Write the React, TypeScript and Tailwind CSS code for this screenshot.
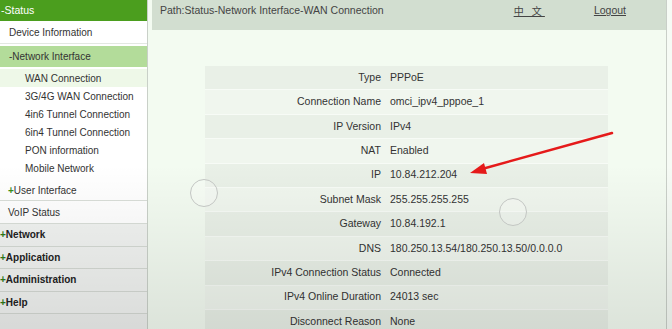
import React from "react";

const rows: [string, string][] = [
  ["Type", "PPPoE"],
  ["Connection Name", "omci_ipv4_pppoe_1"],
  ["IP Version", "IPv4"],
  ["NAT", "Enabled"],
  ["IP", "10.84.212.204"],
  ["Subnet Mask", "255.255.255.255"],
  ["Gateway", "10.84.192.1"],
  ["DNS", "180.250.13.54/180.250.13.50/0.0.0.0"],
  ["IPv4 Connection Status", "Connected"],
  ["IPv4 Online Duration", "24013 sec"],
  ["Disconnect Reason", "None"],
];

const subItems = [
  "3G/4G WAN Connection",
  "4in6 Tunnel Connection",
  "6in4 Tunnel Connection",
  "PON information",
  "Mobile Network",
];

const bottomItems = ["Network", "Application", "Administration", "Help"];

export default function App() {
  return (
    <div
      className="relative w-[672px] h-[329px] overflow-hidden flex bg-white text-[#333]"
      style={{ fontFamily: '"Liberation Sans", Arial, sans-serif' }}
    >
      {/* Sidebar */}
      <div className="w-[148px] shrink-0 flex flex-col border-r border-[#c9d0c8] bg-white text-[10px]">
        <div className="h-[21px] shrink-0 bg-[#4b9e1e] text-white flex items-center pl-[1px] text-[10.5px]">-Status</div>
        <div className="h-[23px] shrink-0 flex items-center pl-[9px] border-b border-[#e3e8e2]">Device Information</div>
        <div className="h-[2px] shrink-0" />
        <div className="h-[21px] shrink-0 bg-[#b3dc9a] flex items-center pl-[9px]">-Network Interface</div>
        <div className="h-[2px] shrink-0" />
        <div className="h-[18px] shrink-0 bg-[#eef8e8] flex items-center pl-[25px]">WAN Connection</div>
        {subItems.map((s) => (
          <div key={s} className="h-[18px] shrink-0 flex items-center pl-[25px]">
            {s}
          </div>
        ))}
        <div className="h-[4px] shrink-0" />
        <div className="h-[20px] shrink-0 flex items-center pl-[8px] border-b border-[#d9ded8]">
          <span className="text-[#3a8f1a] font-bold">+</span>User Interface
        </div>
        <div className="h-[23px] shrink-0 flex items-center pl-[8px] border-b border-[#d9ded8]">VoIP Status</div>
        {bottomItems.map((s) => (
          <div
            key={s}
            className="h-[22.5px] shrink-0 flex items-center pl-[0px] border-b border-[#d5dad4] bg-[#f1f3f1] font-bold text-[#222]"
          >
            <span className="text-[#2f7a14]">+</span>
            {s}
          </div>
        ))}
        <div className="flex-1 bg-[#eef0ee]" />
      </div>

      {/* Main */}
      <div className="w-[519px] shrink-0 flex flex-col bg-[#f3fbf1] border-r border-[#c9cfc8] pl-[4px]">
        <div className="h-[30px] shrink-0 bg-[#d2ded0] flex items-start pt-[3px] pl-[8px] text-[10.5px] text-[#444]">
          <span className="flex-1">Path:Status-Network Interface-WAN Connection</span>
          <span
            className="underline mr-[49px] tracking-[3px] text-[10px]"
            style={{ fontFamily: '"Noto Sans CJK SC", sans-serif' }}
          >
            中 文
          </span>
          <span className="underline mr-[40px]">Logout</span>
        </div>
        <div className="shrink-0 pt-[36px] pl-[53px]">
          <div className="w-[403px] flex flex-col text-[10.5px]">
            {rows.map(([k, v], i) => (
              <div
                key={k}
                className={`h-[24.4px] shrink-0 flex items-center border-b border-[#f7fbf6] ${
                  i % 2 === 0 ? "bg-[#e9f0e7]" : "bg-[#f0f6ee]"
                }`}
              >
                <div className="w-[180px] shrink-0 text-right pr-[4px]">{k}</div>
                <div className="pl-[5px]">{v}</div>
              </div>
            ))}
          </div>
        </div>
      </div>
      <div className="flex-1 bg-[#f6fbf5]" />

      {/* video vignette */}
      <div className="pointer-events-none absolute inset-0 bg-gradient-to-b from-transparent via-transparent to-[#00000018]" />

      {/* circles */}
      <div className="pointer-events-none absolute left-[190px] top-[179px] w-[28px] h-[28px] rounded-full border-[1.5px] border-[#c3c6c3] bg-white/20" />
      <div className="pointer-events-none absolute left-[499px] top-[198px] w-[28px] h-[28px] rounded-full border-[1.5px] border-[#c3c6c3] bg-white/20" />

      {/* arrow */}
      <svg className="pointer-events-none absolute left-0 top-0" width="672" height="329">
        <line x1="612" y1="133" x2="482" y2="169" stroke="#e51a1a" strokeWidth="2.5" strokeLinecap="round" />
        <polygon points="470,173 484,163 487,174" fill="#e51a1a" />
      </svg>
    </div>
  );
}
